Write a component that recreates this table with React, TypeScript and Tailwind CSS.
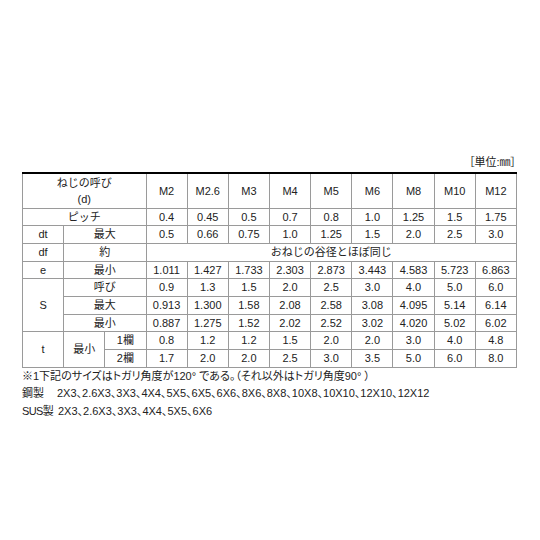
import React from 'react';

const sizes = ['M2', 'M2.6', 'M3', 'M4', 'M5', 'M6', 'M8', 'M10', 'M12'];

const pitch = ['0.4', '0.45', '0.5', '0.7', '0.8', '1.0', '1.25', '1.5', '1.75'];
const dtMax = ['0.5', '0.66', '0.75', '1.0', '1.25', '1.5', '2.0', '2.5', '3.0'];
const eMin = ['1.011', '1.427', '1.733', '2.303', '2.873', '3.443', '4.583', '5.723', '6.863'];
const sNom = ['0.9', '1.3', '1.5', '2.0', '2.5', '3.0', '4.0', '5.0', '6.0'];
const sMax = ['0.913', '1.300', '1.58', '2.08', '2.58', '3.08', '4.095', '5.14', '6.14'];
const sMin = ['0.887', '1.275', '1.52', '2.02', '2.52', '3.02', '4.020', '5.02', '6.02'];
const t1 = ['0.8', '1.2', '1.2', '1.5', '2.0', '2.0', '3.0', '4.0', '4.8'];
const t2 = ['1.7', '2.0', '2.0', '2.5', '3.0', '3.5', '5.0', '6.0', '8.0'];

const cell = 'border border-[#9a9a9a] p-0 text-center align-middle font-normal';

const Values = ({ list }: { list: string[] }) => (
  <>
    {list.map((v, i) => (
      <td key={i} className={cell}>
        {v}
      </td>
    ))}
  </>
);

const App = () => {
  return (
    <div
      className="w-[540px] h-[540px] bg-white text-[#222] text-[11px]"
      style={{ fontFamily: '"Liberation Sans", Arial, "Noto Sans CJK JP", sans-serif' }}
    >
      <div className="pt-[154px] pl-[22px] w-[516px]">
        {/* unit label */}
        <div className="flex justify-end h-[18px] leading-[16px] text-[11px] [font-feature-settings:'palt']">
          ［単位:㎜］
        </div>

        {/* spec table */}
        <table className="table-fixed w-[494px] border-collapse border border-black border-t-2">
          <colgroup>
            {Array.from({ length: 12 }).map((_, i) => (
              <col key={i} className="w-[41.17px]" />
            ))}
          </colgroup>
          <tbody>
            <tr className="h-[35px]">
              <th colSpan={3} className={`${cell} leading-[16px]`}>
                ねじの呼び
                <br />
                (d)
              </th>
              {sizes.map((s) => (
                <th key={s} className={cell}>
                  {s}
                </th>
              ))}
            </tr>
            <tr className="h-[17.7px]">
              <td colSpan={3} className={cell}>ピッチ</td>
              <Values list={pitch} />
            </tr>
            <tr className="h-[17.7px]">
              <td className={cell}>dt</td>
              <td colSpan={2} className={cell}>最大</td>
              <Values list={dtMax} />
            </tr>
            <tr className="h-[17.7px]">
              <td className={cell}>df</td>
              <td colSpan={2} className={cell}>約</td>
              <td colSpan={9} className={cell}>おねじの谷径とほぼ同じ</td>
            </tr>
            <tr className="h-[17.7px]">
              <td className={cell}>e</td>
              <td colSpan={2} className={cell}>最小</td>
              <Values list={eMin} />
            </tr>
            <tr className="h-[17.7px]">
              <td rowSpan={3} className={cell}>S</td>
              <td colSpan={2} className={cell}>呼び</td>
              <Values list={sNom} />
            </tr>
            <tr className="h-[17.7px]">
              <td colSpan={2} className={cell}>最大</td>
              <Values list={sMax} />
            </tr>
            <tr className="h-[17.7px]">
              <td colSpan={2} className={cell}>最小</td>
              <Values list={sMin} />
            </tr>
            <tr className="h-[17.7px]">
              <td rowSpan={2} className={cell}>t</td>
              <td rowSpan={2} className={cell}>最小</td>
              <td className={cell}>1欄</td>
              <Values list={t1} />
            </tr>
            <tr className="h-[17.7px]">
              <td className={cell}>2欄</td>
              <Values list={t2} />
            </tr>
          </tbody>
        </table>

        {/* notes */}
        <div className="leading-[17.5px] text-[11px] whitespace-nowrap [font-feature-settings:'palt']">
          <div>※1下記のサイズはトガリ角度が120° である。（それ以外はトガリ角度90° ）</div>
          <div className="flex">
            <span className="w-[35px] shrink-0">鋼製</span>
            <span>2X3、2.6X3、3X3、4X4、5X5、6X5、6X6、8X6、8X8、10X8、10X10、12X10、12X12</span>
          </div>
          <div className="flex">
            <span className="w-[35px] shrink-0 tracking-[-0.6px]">SUS製</span>
            <span className="pl-[1px]">2X3、2.6X3、3X3、4X4、5X5、6X6</span>
          </div>
        </div>
      </div>
    </div>
  );
};

export default App;
